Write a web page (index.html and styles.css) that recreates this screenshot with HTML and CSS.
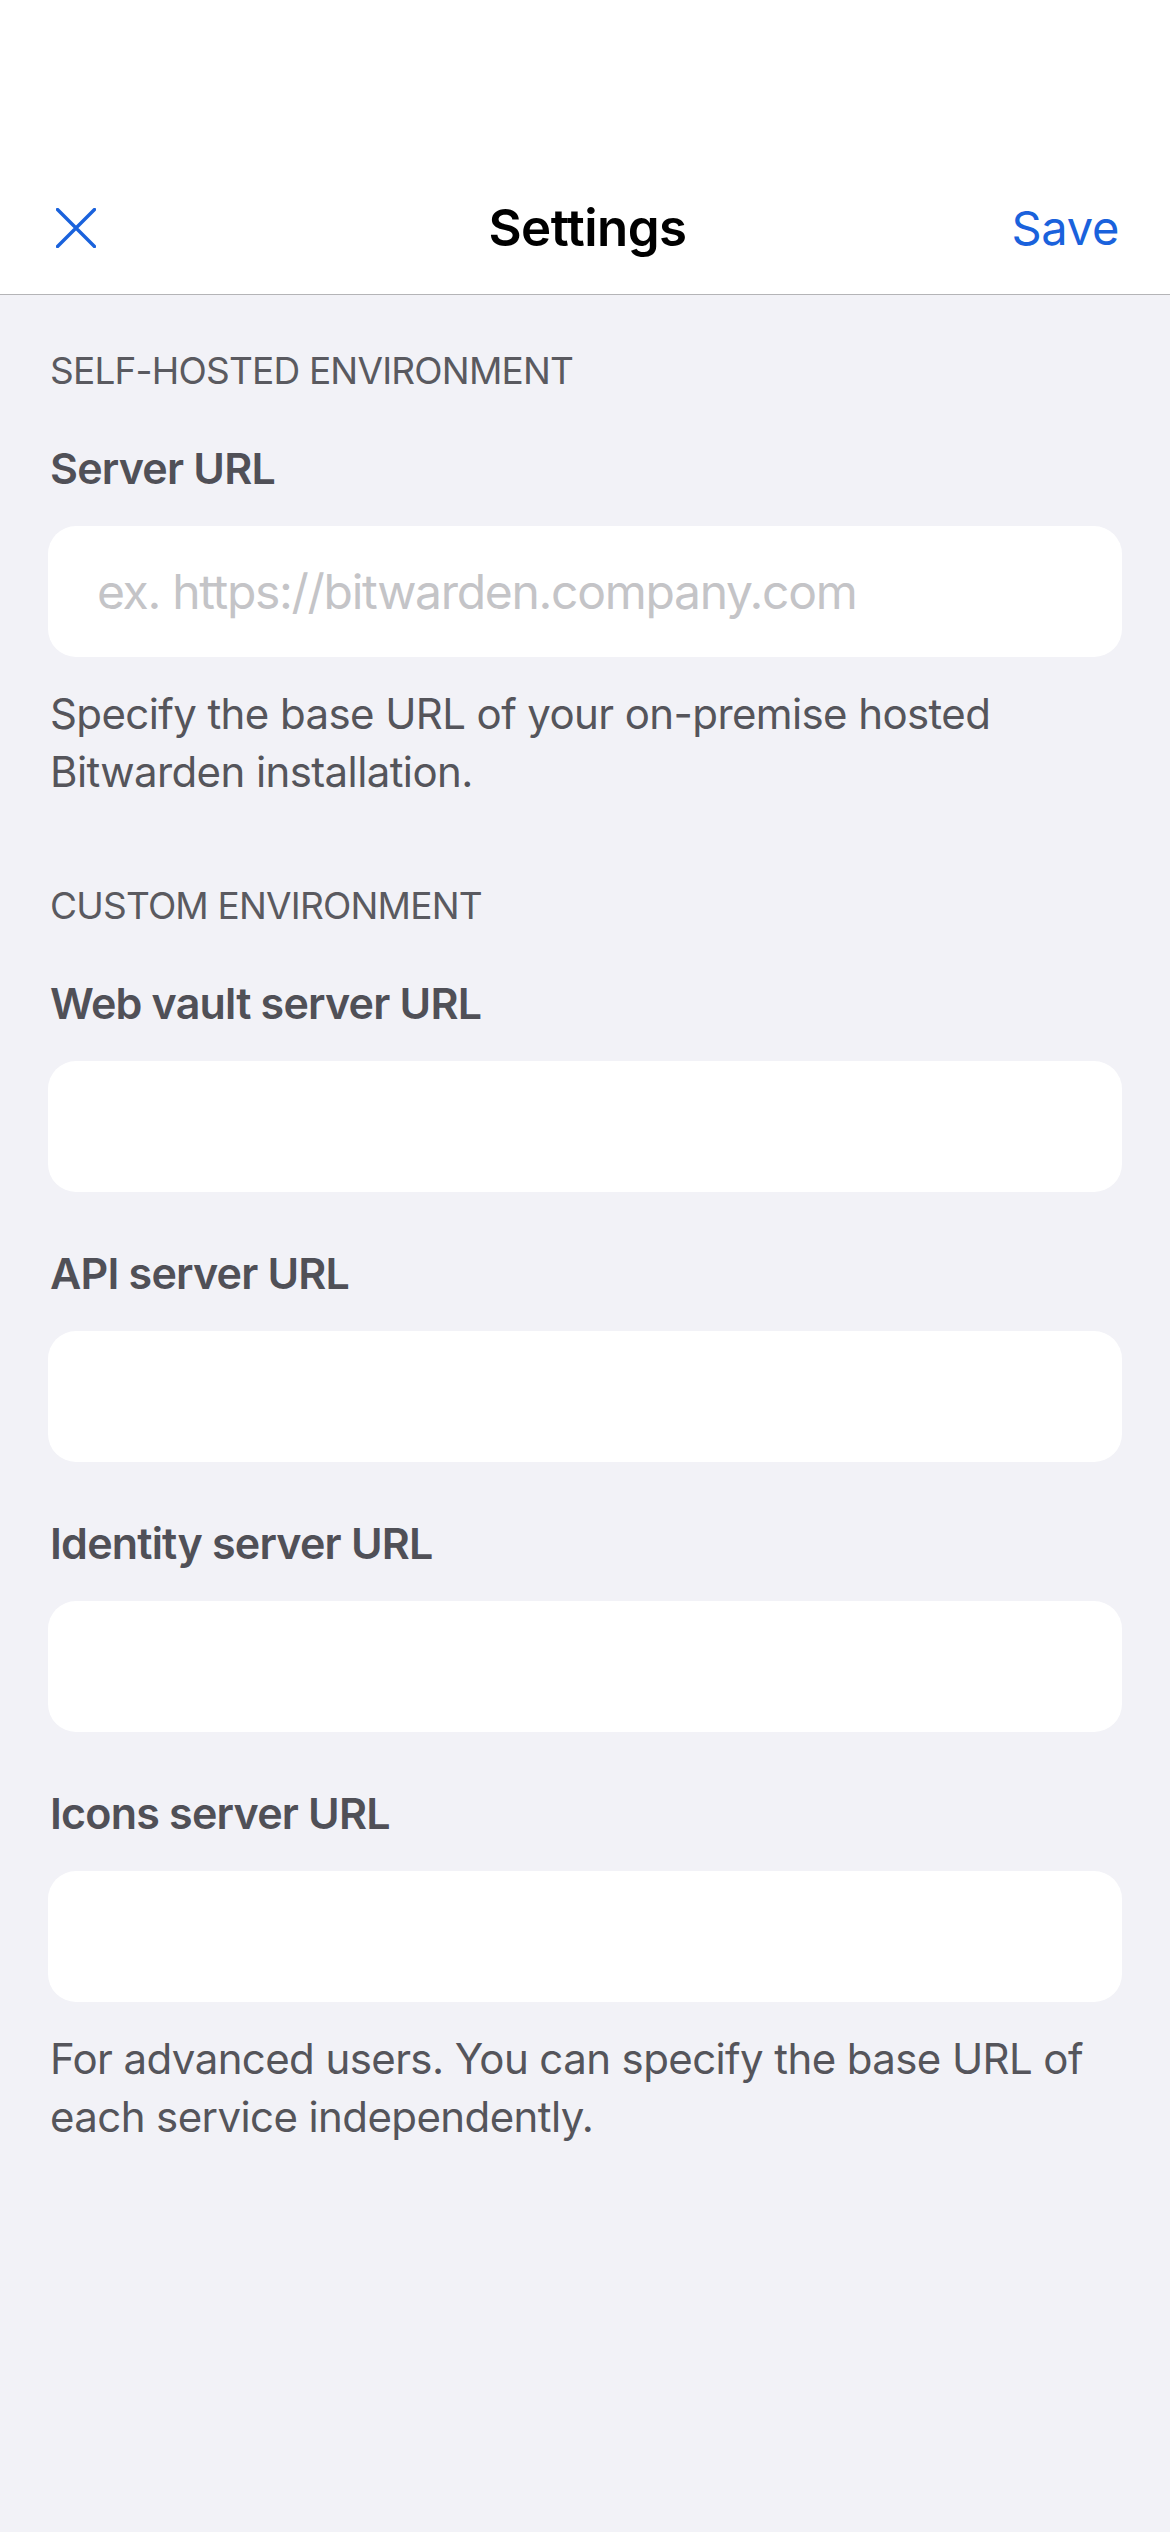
FILE: index.html
```html
<!DOCTYPE html>
<html lang="en">
<head>
<meta charset="utf-8">
<title>Settings</title>
<link rel="stylesheet" href="styles.css">
</head>
<body>
<div class="page">
  <header class="topbar">
    <div class="status"></div>
    <nav class="navbar">
      <button class="nav-close" aria-label="Close">
        <svg width="40" height="40" viewBox="0 0 40 40"><path d="M1.5 1.5 L38.5 38.5 M38.5 1.5 L1.5 38.5" stroke="#1a62dc" stroke-width="3.4" stroke-linecap="round" fill="none"/></svg>
      </button>
      <h1 class="nav-title">Settings</h1>
      <button class="nav-save">Save</button>
    </nav>
  </header>
  <main class="content">
    <section class="group group-first">
      <h2 class="section-title">SELF-HOSTED ENVIRONMENT</h2>
      <div class="field">
        <label class="field-label">Server URL</label>
        <div class="field-input"><span class="placeholder">ex. https://bitwarden.company.com</span></div>
      </div>
      <p class="help">Specify the base URL of your on-premise hosted Bitwarden installation.</p>
    </section>
    <section class="group group-second">
      <h2 class="section-title">CUSTOM ENVIRONMENT</h2>
      <div class="field">
        <label class="field-label">Web vault server URL</label>
        <div class="field-input"></div>
      </div>
      <div class="field">
        <label class="field-label">API server URL</label>
        <div class="field-input"></div>
      </div>
      <div class="field">
        <label class="field-label">Identity server URL</label>
        <div class="field-input"></div>
      </div>
      <div class="field">
        <label class="field-label">Icons server URL</label>
        <div class="field-input"></div>
      </div>
      <p class="help">For advanced users. You can specify the base URL of each service independently.</p>
    </section>
  </main>
</div>
</body>
</html>
```

FILE: styles.css
```css
html, body {
  margin: 0;
  padding: 0;
  background: #f2f2f7;
}
body {
  font-family: Inter, "Noto Sans", "Liberation Sans", sans-serif;
  width: 1170px;
  min-height: 2532px;
}
.page {
  min-height: 2532px;
  background: #f2f2f7;
}
.topbar {
  background: #ffffff;
  border-bottom: 1px solid #b4b4b7;
}
.status {
  height: 162px;
}
.navbar {
  height: 132px;
  display: grid;
  grid-template-columns: 1fr auto 1fr;
  align-items: center;
  padding: 0 51px 0 56px;
}
.nav-close {
  justify-self: start;
  background: none;
  border: 0;
  padding: 0;
  width: 40px;
  height: 40px;
  display: flex;
}
.nav-title {
  margin: 0;
  font-size: 51px;
  font-weight: 600;
  color: #000000;
  letter-spacing: -0.5px;
  line-height: 132px;
}
.nav-save {
  justify-self: end;
  background: none;
  border: 0;
  padding: 0;
  font-family: inherit;
  font-size: 47px;
  font-weight: 400;
  color: #1a62dc;
  letter-spacing: -0.3px;
  line-height: 132px;
}
.content {
  padding: 0 48px;
}
.group {
  display: flex;
  flex-direction: column;
}
.group-first {
  padding-top: 52px;
}
.group-second {
  padding-top: 81px;
}
.section-title {
  margin: 0;
  font-size: 37px;
  font-weight: 400;
  color: #5a5a60;
  line-height: 48px;
  letter-spacing: -0.8px;
  padding-left: 2px;
}
.field {
  display: flex;
  flex-direction: column;
  margin-top: 45px;
}
.field + .field {
  margin-top: 53px;
}
.field-label {
  font-size: 43px;
  font-weight: 600;
  color: #505057;
  line-height: 56px;
  padding-left: 2px;
  letter-spacing: -0.8px;
}
.field-input {
  margin-top: 30px;
  height: 131px;
  background: #ffffff;
  border-radius: 28px;
  display: flex;
  align-items: center;
  padding: 0 49px;
}
.placeholder {
  font-size: 48px;
  color: #c4c4c7;
  letter-spacing: -1.3px;
}
.help {
  margin: 28px 0 0;
  font-size: 42px;
  line-height: 58px;
  color: #55555b;
  padding-left: 2px;
  letter-spacing: -0.6px;
}
```
